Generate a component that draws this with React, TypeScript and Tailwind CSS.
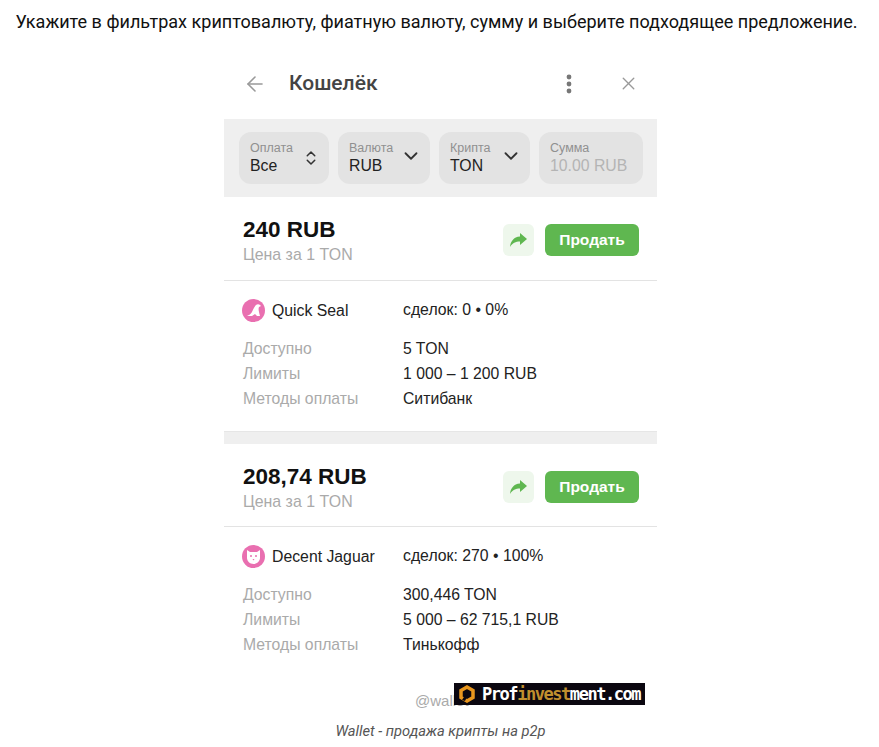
import { ArrowLeft, ChevronDown, ChevronsUpDown, X } from "lucide-react";

const offers = [
  {
    price: "240 RUB",
    name: "Quick Seal",
    deals: "сделок: 0 • 0%",
    available: "5 TON",
    limits: "1 000 – 1 200 RUB",
    method: "Ситибанк",
    kind: "seal",
  },
  {
    price: "208,74 RUB",
    name: "Decent Jaguar",
    deals: "сделок: 270 • 100%",
    available: "300,446 TON",
    limits: "5 000 – 62 715,1 RUB",
    method: "Тинькофф",
    kind: "jaguar",
  },
];

function Avatar({ kind }: { kind: string }) {
  return (
    <svg width="23" height="23" viewBox="0 0 23 23" className="shrink-0">
      <circle cx="11.5" cy="11.5" r="11.5" fill="#e96fb0" />
      {kind === "seal" ? (
        <path d="M5 17c2-1 4-2 5-4 1-2 2-5 4-7 1-1 3-1 4 0l1 1-2 1c-1 2 0 5 1 9h-3l-2-2-3 2z" fill="#fff" />
      ) : (
        <g>
          <path d="M5 5l3 2h7l3-2v8c0 3-3 6-6.500 6S5 16 5 13z" fill="#fff" />
          <circle cx="9" cy="11" r="1" fill="#e96fb0" />
          <circle cx="14" cy="11" r="1" fill="#e96fb0" />
          <path d="M10.500 14h2l-1 1.500z" fill="#e96fb0" />
        </g>
      )}
    </svg>
  );
}

function Chip({ label, value, width, icon, muted }: { label: string; value: string; width: string; icon?: "sort" | "down"; muted?: boolean }) {
  return (
    <div className={`flex h-[52px] items-center justify-between rounded-xl bg-[#e3e3e3] pl-[11px] pr-[8px] ${width}`}>
      <div className="flex flex-col">
        <span className="text-[12.5px] leading-[14px] text-[#909090]">{label}</span>
        <span className={`mt-[1px] text-[15.8px] leading-[20px] ${muted ? "text-[#b4b4b4]" : "text-[#222]"}`}>{value}</span>
      </div>
      {icon === "sort" && <ChevronsUpDown size={18} strokeWidth={2} className="mr-[1px] text-[#333]" />}
      {icon === "down" && <ChevronDown size={22} strokeWidth={2} className="mb-1 text-[#333]" />}
    </div>
  );
}

function Row({ label, value }: { label: string; value: string }) {
  return (
    <div className="flex h-[25px] items-center text-[15.75px]">
      <span className="w-[160px] text-[#aaa]">{label}</span>
      <span className="text-[#222]">{value}</span>
    </div>
  );
}

export default function App() {
  return (
    <div className="flex h-[747px] w-[879px] flex-col items-center overflow-hidden bg-white font-['Roboto',sans-serif]">
      <p className="mr-[6px] mt-[11px] whitespace-nowrap text-[18.05px] leading-[22px] text-[#111]">
        Укажите в фильтрах криптовалюту, фиатную валюту, сумму и выберите подходящее предложение.
      </p>

      <div className="relative ml-[2px] mt-[27px] w-[433px] font-['Liberation_Sans',sans-serif]">
        {/* Header */}
        <div className="flex h-[59px] items-center pb-[12px] pl-[19px] pr-[18px]">
          <ArrowLeft size={24} strokeWidth={1.6} className="text-[#999]" />
          <h1 className="ml-[22px] flex-1 font-['Roboto',sans-serif] text-[21px] font-medium text-[#444]">Кошелёк</h1>
          <svg width="6" height="20" viewBox="0 0 6 20" className="mr-[46px]">
            <circle cx="3" cy="3" r="2.400" fill="#777" />
            <circle cx="3" cy="10" r="2.400" fill="#777" />
            <circle cx="3" cy="17" r="2.400" fill="#777" />
          </svg>
          <X size={21} strokeWidth={1.6} className="text-[#999]" />
        </div>

        {/* Filters */}
        <div className="flex h-[78px] items-center gap-[9px] bg-[#efefef] pl-[15px]">
          <Chip label="Оплата" value="Все" width="w-[90px]" icon="sort" />
          <Chip label="Валюта" value="RUB" width="w-[92px]" icon="down" />
          <Chip label="Крипта" value="TON" width="w-[91px]" icon="down" />
          <Chip label="Сумма" value="10.00 RUB" width="w-[104px]" muted />
        </div>

        {offers.map((offer, i) => (
          <div key={offer.name}>
            <div className={`flex items-center justify-between border-b border-[#e3e3e3] pl-[19px] pr-[18px] pt-[3px] ${i === 0 ? "h-[84px]" : "h-[83px]"}`}>
              <div>
                <div className="text-[22.5px] font-bold leading-[30px] text-[#111]">{offer.price}</div>
                <div className="text-[15.9px] leading-[20px] text-[#aaa]">Цена за 1 TON</div>
              </div>
              <div className="flex items-center gap-[11px]">
                <div className="flex h-8 w-[31px] items-center justify-center rounded-md bg-[#eef7ec]">
                  <svg width="17" height="14" viewBox="0 0 17 14">
                    <path d="M10 0l7 6-7 6V8.500C5.500 8.500 2.500 10 0 14c.5-5.500 3.500-10 10-10.500z" fill="#5fb750" />
                  </svg>
                </div>
                <div className="flex h-8 w-[94px] items-center justify-center rounded-md bg-[#5fb750] text-[15.5px] font-bold text-white">Продать</div>
              </div>
            </div>
            <div className="h-[150px] pl-[18px]">
              <div className="flex h-[55px] items-center pt-[4px] text-[15.8px] text-[#222]">
                <div className="flex w-[161px] items-center gap-[7px]">
                  <Avatar kind={offer.kind} />
                  <span>{offer.name}</span>
                </div>
                <span className="mb-[2px]">{offer.deals}</span>
              </div>
              <div className="pl-[1px]">
                <Row label="Доступно" value={offer.available} />
                <Row label="Лимиты" value={offer.limits} />
                <Row label="Методы оплаты" value={offer.method} />
              </div>
            </div>
            {i === 0 && <div className="h-[13px] border-t border-[#e6e6e6] bg-[#efefef]" />}
          </div>
        ))}

        <div className="relative mt-[13px] h-[20px] pl-[191px] text-[15px] text-[#aaa]">
          @wallet
          {/* Watermark */}
          <div className="absolute left-[230px] top-[-7px] flex h-[22px] w-[191px] items-center gap-[7px] bg-[#0b0710] pl-[5px] font-['DejaVu_Sans_Mono',monospace] text-[17px] font-bold leading-none tracking-[-1.45px] text-white">
            <svg width="16" height="18" viewBox="0 0 16 18" className="shrink-0">
              <path d="M8 2l6 3.500v7L8 16l-6-3.500v-7z" fill="none" stroke="#e8961e" strokeWidth="3.500" />
              <path d="M3 15l4-6 2 1-3 6z" fill="#0b0710" />
            </svg>
            <span>Prof<span className="text-[#c08f2e]">invest</span>ment.com</span>
          </div>
        </div>
      </div>

      <p className="ml-[2px] mt-[10px] text-[14.7px] italic text-[#555]">Wallet - продажа крипты на p2p</p>
    </div>
  );
}
